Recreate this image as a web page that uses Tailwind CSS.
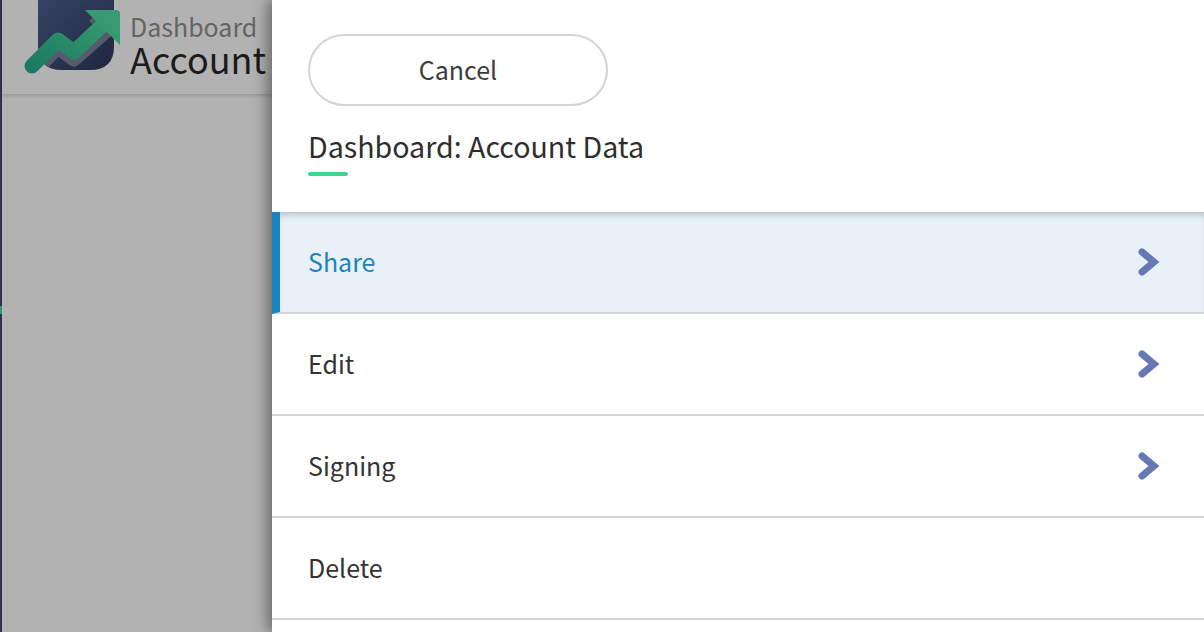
<!doctype html>
<html><head><meta charset="utf-8"><script src="https://cdn.jsdelivr.net/npm/@tailwindcss/browser@4"></script></head>
<body class="m-0 overflow-hidden bg-white">
<div class="flex h-[632px] w-[1204px] overflow-hidden font-['Noto_Sans_CJK_SC','Noto_Sans',sans-serif]">
  <aside class="flex h-full w-[272px] shrink-0">
    <div class="flex w-[2px] shrink-0 flex-col bg-[#2e3150]">
      <div class="h-[306px]"></div>
      <div class="h-[8px] bg-[#2f9a72]"></div>
    </div>
    <div class="flex min-w-0 flex-1 flex-col bg-[#b2b2b2]">
      <header class="flex h-[94px] shrink-0 items-start bg-[#b2b2b2] shadow-[0_2px_3px_rgba(0,0,0,0.14)]">
        <svg class="ml-[20px] h-[80px] w-[102px] shrink-0" viewBox="0 0 102 80">
          <defs>
            <linearGradient id="b" x1="0" y1="0" x2="1" y2="1"><stop offset="0" stop-color="#354564"/><stop offset="1" stop-color="#1f2640"/></linearGradient>
            <linearGradient id="g" x1="0" y1="1" x2="1" y2="0"><stop offset="0" stop-color="#1b7a62"/><stop offset="1" stop-color="#389a70"/></linearGradient>
            <clipPath id="c"><path d="M16 0H92V46Q92 70 68 70H40Q16 70 16 46Z"/></clipPath>
          </defs>
          <path d="M16 0H92V46Q92 70 68 70H40Q16 70 16 46Z" fill="url(#b)"/>
          <path clip-path="url(#c)" d="M13 70L36 47L52 59L86 29" fill="none" stroke="#565b6c" stroke-width="15" stroke-linejoin="round"/>
          <path clip-path="url(#c)" d="M70 18L80 28" fill="none" stroke="#565b6c" stroke-width="8"/>
          <path d="M10 66L36 40L52 52L86 20" fill="none" stroke="url(#g)" stroke-width="15" stroke-linecap="round" stroke-linejoin="round"/>
          <path d="M63 10H94Q98 10 98 14V45Z" fill="#389a70"/>
        </svg>
        <div class="ml-[6px] flex min-w-0 flex-col whitespace-nowrap">
          <span class="mt-[13px] text-[25px] leading-[26px] text-[#666463]">Dashboard</span>
          <span class="text-[36px] leading-[38px] text-[#1b1b1b]">Account</span>
        </div>
      </header>
    </div>
  </aside>
  <main class="flex h-full min-w-0 flex-1 flex-col bg-white shadow-[-4px_0_14px_rgba(0,0,0,0.45)]">
    <div class="flex h-[212px] shrink-0 flex-col items-start pl-[36px] pt-[34px]">
      <button class="h-[72px] w-[300px] rounded-full border-2 border-[#d4d4d4] bg-white text-[25px] text-[#3c3c3c]">Cancel</button>
      <h1 class="mt-[20px] text-[28.6px] leading-[40px] font-normal text-[#2e2e2e]">Dashboard: Account Data</h1>
      <div class="mt-[6px] h-[4px] w-[40px] rounded-full bg-[#3bd692]"></div>
    </div>
    <ul class="m-0 list-none p-0">
      <li class="flex h-[102px] items-center justify-between border-b-2 border-[#d6d6d6] border-l-8 border-l-[#1b83bd] bg-[#e9f1f8] pl-[28px] pr-[44px] text-[25px] text-[#1b83bd] shadow-[inset_0_6px_6px_-3px_rgba(100,120,135,0.38)]"><span>Share</span>
        <svg class="h-[32px] w-[24px]" viewBox="0 0 24 32"><path d="M6 6L18 16L6 26" fill="none" stroke="#6679b5" stroke-width="7" stroke-linecap="round"/></svg></li>
      <li class="flex h-[102px] items-center justify-between border-b-2 border-[#d6d6d6] pl-[36px] pr-[44px] text-[25px] text-[#333333]"><span>Edit</span>
        <svg class="h-[32px] w-[24px]" viewBox="0 0 24 32"><path d="M6 6L18 16L6 26" fill="none" stroke="#6679b5" stroke-width="7" stroke-linecap="round"/></svg></li>
      <li class="flex h-[102px] items-center justify-between border-b-2 border-[#d6d6d6] pl-[36px] pr-[44px] text-[25px] text-[#333333]"><span>Signing</span>
        <svg class="h-[32px] w-[24px]" viewBox="0 0 24 32"><path d="M6 6L18 16L6 26" fill="none" stroke="#6679b5" stroke-width="7" stroke-linecap="round"/></svg></li>
      <li class="flex h-[102px] items-center border-b-2 border-[#d6d6d6] pl-[36px] pr-[44px] text-[25px] text-[#333333]"><span>Delete</span></li>
    </ul>
  </main>
</div>
</body></html>
